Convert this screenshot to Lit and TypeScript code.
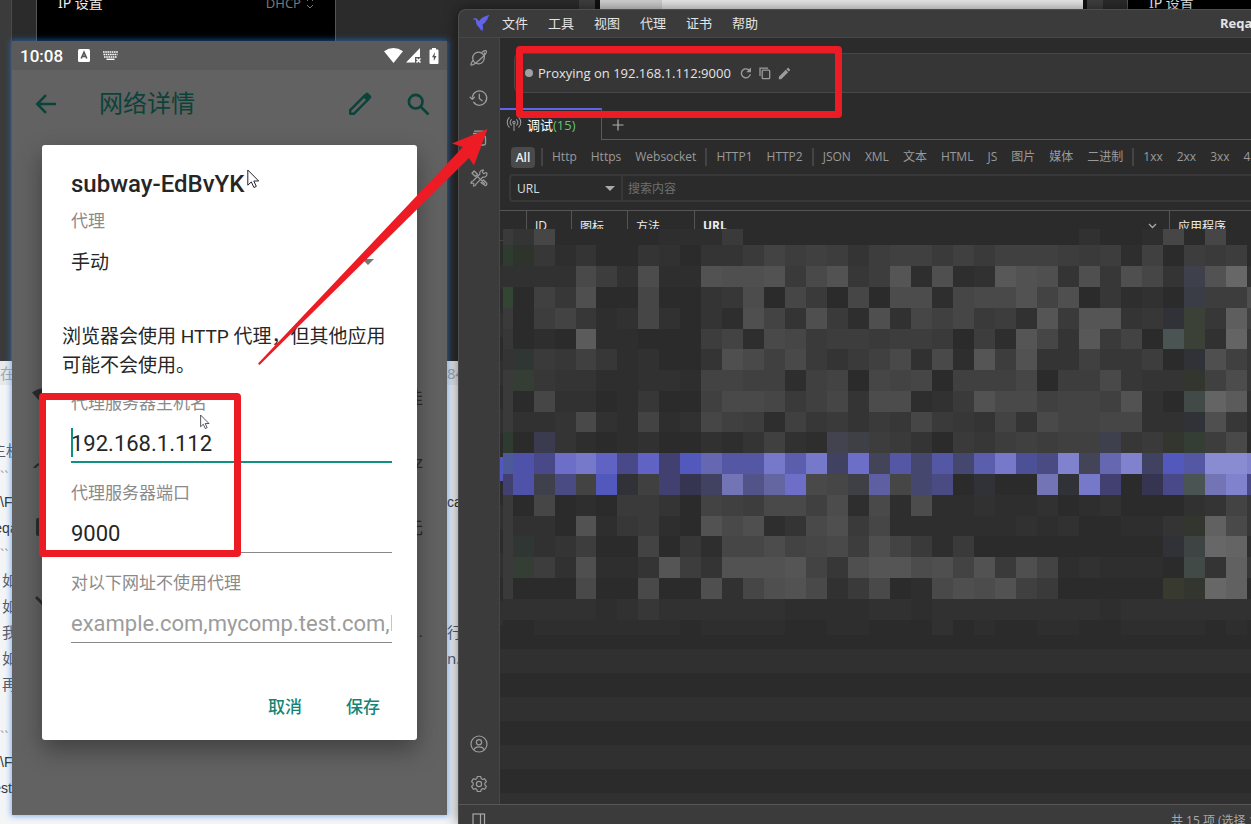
import { LitElement, html, svg, css, nothing } from "lit";
import { customElement } from "lit/decorators.js";

const CJK = css`"Noto Sans CJK SC"`;

/* ---------- mosaic data ---------- */

const GREYS = "abcdefghijklmnopqrstu";
const TINTS: Record<string, string> = {
  "1": "#2e3b31", "2": "#2e332b", "3": "#3e404c", "4": "#334633", "5": "#3a3c46", "6": "#313238",
  "7": "#3c4138", "8": "#4a5452", "9": "#303633", A: "#343e34", B: "#33362f", C: "#424a48",
  D: "#3b3b50", E: "#434350", F: "#3f3f46", G: "#3e404d", H: "#4c5a99", I: "#4e52a8",
  J: "#494989", K: "#6c6ec8", L: "#7678ca", M: "#6063c3", N: "#414070", O: "#5358bd",
  P: "#6567b0", Q: "#5457a3", R: "#5a5ead", S: "#414162", T: "#444458", U: "#45476e",
  V: "#4c5096", W: "#494b82", X: "#8082ce", Y: "#8a8cd1", Z: "#353551", "0": "#7374b5",
  "+": "#525388", "-": "#6466a2", "=": "#5e5fa2", "%": "#3e4344", "*": "#383a30",
};
const MOSAIC = [
  "fdjaaaaabbbfaaaaaaaaaaaaaaaacaabjajaa",
  "12ebdaadcaddfighgdghhfhfhhhgfgbhagfga",
  "cccckgclbbnmmnfknegobmbcpnmdmemjd3nuc",
  "4ahemaajaadelajfajallbjkknimaebca5ggm",
  "fagiebcjcadbmidmfbmcjhjfgcofoode67erh",
  "eabaqbbaaagibkjfggfggfagbojdpfia87cte",
  "d9fehebcaadmkhkfdfhkckbognddheega6mhe",
  "fAeddbbccbiihhbhiajijahhhjaggkeddBhle",
  "fajccabeaahkkjfhjdllbcfnkkhiihncaCtqc",
  "fccdkcbibcjhgbhefdfejfedidkiijjcc6meb",
  "1aDdbabcaacbdhcbEFgfdafeghghhGefBAgka",
  "HIJKLMJMNOPQQLRLSKTQUQURLVWXTPXSOQYYX",
  "NI3WiO6hNZS0+-KkjF=jUWa6aa06LNaZJ80XJ",
  "fajabaffdaihgkkhlbkblbbcbbcabcaaacdie",
  "fccanbefbankmbdkmfjbbbbbbcbcaabbdBske",
  "f9cdgaaiaebjjlijkgmifbfaaaaaaaaa6%utb",
  "fAgcmbbdogdnnnoiemoolminfmibcbbbaCdse",
  "faaakaakaamcjmnkcfkabkmlnhfaaaaa*Busa",
  "cccccbceccccccbbbbccbccccccccbccccccc",
  "aabbbbbbbabbbbaabbaaacabaabbaabbbbaba",
];
const COLS = [10, 21, 21, 21, 20, ...Array(31).fill(21), 4];
const ROWS = [16, 21, 21, 21, 21, 20, 21, 21, 21, 20, 21, 21, 21, 21, 20, 21, 21, 21, 21, 15];

const shade = (c: string) => {
  const g = GREYS.indexOf(c);
  if (g < 0) return TINTS[c] ?? "#2b2b2b";
  const v = 43 + g * 3;
  return `rgb(${v},${v},${v})`;
};

@customElement("pixel-mosaic")
class PixelMosaic extends LitElement {
  static styles = css`
    :host { display: block; }
    .m { display: block; }
  `;
  render() {
    const cells: unknown[] = [];
    let y = 0;
    ROWS.forEach((h, r) => {
      let x = 0;
      COLS.forEach((w, c) => {
        cells.push(svg`<rect x=${x} y=${y} width=${w} height=${h} fill=${shade(MOSAIC[r][c] ?? "a")}></rect>`);
        x += w;
      });
      y += h;
    });
    return html`<svg class="m" width="748" height="406" viewBox="0 0 748 406" shape-rendering="crispEdges" aria-hidden="true">${cells}</svg>`;
  }
}

/* ---------- icons ---------- */

const line = (size: number, body: unknown, w = 1.3) => html`<svg width=${size} height=${size} viewBox="0 0 20 20" fill="none"
  stroke="currentColor" stroke-width=${w} stroke-linecap="round" stroke-linejoin="round" aria-hidden="true">${body}</svg>`;
const solid = (size: number, body: unknown) => html`<svg width=${size} height=${size} viewBox="0 0 24 24" fill="currentColor" aria-hidden="true">${body}</svg>`;

const icons = {
  bird: html`<svg width="18" height="18" viewBox="0 0 18 18" aria-hidden="true"><path fill="#6163e8" d="M0.5 5.6 C1.6 4.2 3.4 3.9 4.9 4.7 L7 7.2 C9 4 12.5 2.2 17.5 .8 C16.5 3 15.8 3.6 15.2 4.2 L16 4.5 C15.2 6 14.3 6.6 13.5 7 L14 7.6 C13 9 11.8 9.8 10.6 10.2 C11 12.8 11.4 15 10.3 17.6 L9.2 15.2 L8.7 16.2 C7.8 14 7 13.2 5.6 12 C4 10.4 4.2 8.2 3.8 6.6 C3.2 5.6 2 5.4 .5 5.6Z"></path></svg>`,
  planet: line(20, svg`<circle cx="9.500" cy="10" r="5.800"></circle><path d="M13 4.200C15.400 2.600 16.900 2.200 17.300 2.800c.8 1-2 4.800-5.800 8.300S3.200 17.700 2.200 17.100c-.7-.5 0-2.300 1.900-4.700M15.300 5v3.500"></path>`),
  history: line(20, svg`<path d="M3.400 9A7.200 7.200 0 1 1 4.600 14.200"></path><path d="M1.200 9.200l2.100 2 2.100-2"></path><path d="M10.300 6.200v4.300l2.800 2.300"></path>`),
  stack: line(20, svg`<path d="M5.500 3.200h9M4.500 5.500h11"></path><rect x="3.500" y="8" width="13" height="9" rx="1.500"></rect>`),
  tools: line(20, svg`<path d="M3 5.200L5.200 3l3.200 3.200-2.200 2.200zM7.600 7.600l7.800 7.800M12 14.500l2.500-2.500 3 3c.6.700.5 1.400-.1 2s-1.300.700-2 .1z"></path><path d="M17 4.500l-2.200 1.200-1.500-1.500L14.500 2c-2.600-.3-4.300 1.700-3.600 4L4 13c-1.600.2-2.200 1.200-1.900 2.600l1.700-.6 1.200 1.200-.6 1.700c1.400.3 2.500-.4 2.700-2L14 9c2.300.700 4.200-1.300 4-3.500z" stroke-width="1.100"></path>`),
  user: line(20, svg`<circle cx="10" cy="10" r="8"></circle><circle cx="10" cy="8.200" r="2.600"></circle><path d="M4.800 15.800c.7-2 2.700-3 5.200-3s4.500 1 5.200 3"></path>`, 1.2),
  gear: line(20, svg`<circle cx="10" cy="10" r="2.600"></circle><path d="M8.300 2.500h3.400l.5 2.100 1.400.8 2.100-.7 1.700 2.900-1.600 1.500v1.800l1.600 1.500-1.700 2.900-2.100-.7-1.400.8-.5 2.100H8.300l-.5-2.100-1.400-.8-2.100.7-1.700-2.900 1.600-1.500V9.100L2.600 7.600l1.700-2.900 2.100.7 1.400-.8z"></path>`, 1.2),
  panel: html`<svg width="14" height="16" viewBox="0 0 14 16" fill="none" stroke="currentColor" stroke-width="1.200" aria-hidden="true"><rect x="1" y="1" width="11.500" height="15"></rect><path d="M8.500 1v15"></path></svg>`,
  antenna: line(16, svg`<circle cx="10" cy="8" r="1.500"></circle><path d="M10 9.500V18M6.800 11.500a4.500 4.500 0 0 1 0-7M13.200 11.500a4.500 4.500 0 0 0 0-7M4 14a8.500 8.500 0 0 1 0-12M16 14a8.500 8.500 0 0 0 0-12"></path>`),
  plus: html`<svg width="12" height="12" viewBox="0 0 12 12" stroke="currentColor" stroke-width="1.200" aria-hidden="true"><path d="M6 .5v11M.5 6h11"></path></svg>`,
  refresh: solid(14, svg`<path d="M20.500 2.500v8h-8l3.200-3.200A6.500 6.500 0 1 0 18.200 14h2.300A8.800 8.800 0 1 1 17.300 5.700z"></path>`),
  copy: html`<svg width="14" height="14" viewBox="0 0 14 14" fill="none" stroke="currentColor" stroke-width="1.300" aria-hidden="true"><path d="M2 10V2.200h8"></path><rect x="4.200" y="4.200" width="7.500" height="8.500" rx="1"></rect></svg>`,
  pen: solid(15, svg`<path d="M3 17.250V21h3.750L17.810 9.940l-3.750-3.750zM20.710 7.040a1 1 0 0 0 0-1.410l-2.340-2.340a1 1 0 0 0-1.410 0l-1.830 1.830 3.750 3.750z"></path>`),
  back: html`<svg width="22" height="20" viewBox="0 0 22 20" fill="none" stroke="currentColor" stroke-width="2.500" aria-hidden="true"><path d="M21 10H2.500M11 1.200L2.200 10l8.800 8.800"></path></svg>`,
  edit: html`<svg width="24" height="24" viewBox="0 0 24 24" aria-hidden="true"><path fill="none" stroke="currentColor" stroke-width="2.400" stroke-linejoin="round" d="M2.200 18.200L17 3.400l3.600 3.600L5.800 21.800H2.200z"></path><path fill="currentColor" d="M14.500 4.500L18 1q1-.8 2 0l3 3q.8 1 0 2l-3.500 3.500z"></path></svg>`,
  search: html`<svg width="23" height="23" viewBox="0 0 23 23" fill="none" stroke="currentColor" stroke-width="2.600" aria-hidden="true"><circle cx="8.700" cy="8.700" r="6.800"></circle><path d="M13.500 13.500l8 8"></path></svg>`,
  wifi: html`<svg width="19" height="15" viewBox="0 0 19 15" fill="currentColor" aria-hidden="true"><path d="M9.500 15L0 3.300Q9.500-3.300 19 3.300z"></path></svg>`,
  cell: html`<svg width="15" height="15" viewBox="0 0 15 15" aria-hidden="true"><path fill="currentColor" d="M14 0v9H9v5.500H0z"></path><path d="M10.500 10.500l4 4m0-4l-4 4" stroke="currentColor" stroke-width="1.500"></path></svg>`,
  battery: html`<svg width="10" height="16" viewBox="0 0 10 16" aria-hidden="true"><path fill="currentColor" d="M3 0h4v1.500h1.500q1 0 1 1v12.500q0 1-1 1H1.500q-1 0-1-1V2.500q0-1 1-1H3z"></path><path d="M6 4L3 9.200h1.800V13L7.500 8H5.500z" fill="#555"></path></svg>`,
  letter: html`<svg width="12" height="13" viewBox="0 0 12 13" aria-hidden="true"><rect width="12" height="13" rx="1.500" fill="currentColor"></rect><path d="M3.200 9.500L6 3.200l2.800 6.300M4.300 7.400h3.400" fill="none" stroke="#555" stroke-width="1.600"></path></svg>`,
  keyboard: html`<svg width="15" height="9" viewBox="0 0 15 9" aria-hidden="true" stroke="currentColor" fill="none"><path d="M0 1h15M0.500 3.500h14M1 6h13" stroke-width="1.700" stroke-dasharray="1.600 .6"></path><path d="M3.500 8.300h8" stroke-width="1.400"></path></svg>`,
  updown: html`<svg width="8" height="12" viewBox="0 0 8 12" fill="none" stroke="currentColor" aria-hidden="true"><path d="M1 4l3-3 3 3M1 8l3 3 3-3"></path></svg>`,
  cursor: html`<svg width="13" height="20" viewBox="0 0 13 20" aria-hidden="true"><path d="M.8 1v15.200l3.500-3.300 2.600 5.600 2.400-1.100-2.500-5.400h4.900z" fill="#fff" stroke="#222230" stroke-width="1"></path></svg>`,
};

/* ---------- document behind the windows ---------- */

type DocLine = { l?: string; r?: string; kind?: string };
const DOC: DocLine[] = [
  { l: "在", r: "84", kind: "faint" }, {}, {}, { l: "主机", kind: "mid" }, { l: "``", kind: "faint" },
  { l: "\\F", r: "ca", kind: "code" }, { l: "eqa", kind: "code mid" }, { l: "``", kind: "faint" },
  { l: "如", kind: "indent" }, { l: "如", kind: "indent" }, { l: "我", r: "行", kind: "indent" },
  { l: "如", r: "n.v", kind: "indent" }, { l: "再", kind: "indent" }, {}, { l: "``", kind: "faint" },
  { l: "\\F", kind: "code" }, { l: "est", kind: "code end" },
];

@customElement("desk-backdrop")
class DeskBackdrop extends LitElement {
  static styles = css`
    :host { display: flex; flex-direction: column; height: 100%; font-family: "Noto Sans", ${CJK}, sans-serif; overflow: hidden; }
    .dark { display: flex; height: 361px; flex: none; background: #2b2b2b; }
    .dark > * { flex: none; box-sizing: border-box; }
    .rail { width: 12px; background: #3b3b3b; border-right: 1px solid #4a4a4a; }
    .screen { display: flex; justify-content: space-between; width: 300px; margin-left: 24px; padding: 0 21px;
      border: 0 solid #555; border-width: 0 1px; background: #000; color: #eee; font-size: 14px; line-height: 6px; white-space: nowrap; }
    .dim { display: flex; gap: 5px; color: #777; font-size: 13px; }
    .dim svg { margin-top: -3px; }
    .strip { display: flex; margin-left: 243px; }
    .s1 { width: 16px; background: #3f3f3f; }
    .s2 { width: 5px; background: #111; }
    .s3 { width: 62px; background: #d2d2d2; }
    .s4 { width: 421px; background: #eaeaea; }
    .s5 { width: 4px; background: #111; }
    .doc { flex: 1; background: #f4f5f6; font-size: 15px; color: #555a66; width: 459px; }
    .ln { display: flex; gap: 435px; height: 26px; line-height: 26px; }
    .bit { width: 12px; display: flex; overflow: hidden; white-space: nowrap; flex: none; }
    .mid .bit { justify-content: center; }
    .end .bit { justify-content: flex-end; }
    .indent .bit:first-child { padding-left: 2px; width: 10px; }
    .code { color: #333; font-family: "Liberation Sans", sans-serif; font-size: 14px; }
    .faint { color: #a5a8ad; }
    .ln:first-child { background: #e8e9ea; height: 24px; line-height: 24px; }
  `;
  render() {
    return html`
      <div class="dark">
        <div class="rail"></div>
        <div class="screen"><span>IP 设置</span><span class="dim">DHCP ${icons.updown}</span></div>
        <div class="strip"><i class="s1"></i><i class="s2"></i><i class="s3"></i><i class="s4"></i><i class="s5"></i><i class="s1"></i></div>
        <div class="screen"><span>IP 设置</span></div>
      </div>
      <div class="doc">
        ${DOC.map((d) => html`<div class="ln ${d.kind ?? ""}"><span class="bit">${d.l ?? ""}</span><span class="bit">${d.r ?? ""}</span></div>`)}
      </div>`;
  }
}

/* ---------- phone ---------- */

@customElement("phone-window")
class PhoneWindow extends LitElement {
  static styles = css`
    :host { display: flex; flex-direction: column; position: relative; background: #626262; font-family: Roboto, ${CJK}, sans-serif;
      box-shadow: 0 0 6px 1px rgba(40, 130, 240, 0.6); }
    button { font: inherit; border: 0; background: none; padding: 0; color: inherit; display: flex; }
    .status { display: flex; align-items: center; height: 29px; padding: 0 8px; background: #5a5a5a; color: #fff; }
    .time { font-size: 17px; font-weight: 500; margin-right: 15px; }
    .status svg { margin-right: 13px; }
    .status .net svg { margin: 0 0 0 3px; }
    .status .net svg:last-child { margin-left: 8px; }
    .net { margin-left: auto; display: flex; align-items: center; }
    .bar { display: flex; align-items: center; height: 68px; padding: 0 17px 0 23px; color: #0b4239; gap: 35px; }
    .bar h1 { font-size: 24px; line-height: 30px; font-weight: 400; margin: 0 auto 0 7px; }
    .rows { display: flex; flex-direction: column; margin-top: 226px; padding: 0 24px 0 20px; color: #2c2c2c; font-size: 17px; }
    .row { display: flex; justify-content: space-between; align-items: center; height: 65px; }
    .row.tall { height: 82px; }
    .tall span { align-self: flex-end; }
    .dialog { position: absolute; left: 30px; right: 30px; top: 104px; height: 595px; box-sizing: border-box; padding: 24px 25px 0 29px; background: #fff;
      border-radius: 3px; box-shadow: 0 10px 24px rgba(0, 0, 0, 0.35); color: #262626; display: flex; flex-direction: column; }
    h2 { margin: 0; font-size: 24px; line-height: 30px; font-weight: 500; }
    label { font-size: 17px; line-height: 24px; color: #8a8a8a; }
    .l1 { margin-top: 10px; }
    .pick { display: flex; align-items: center; margin-top: 14px; height: 30px; padding-right: 18px; }
    select { appearance: none; flex: 1; border: 0; background: none; padding: 0; font: inherit; font-size: 19px; color: inherit; height: 30px; }
    .tri { border: 6px solid transparent; border-top-color: #777; border-bottom: 0; }
    p { margin: 45px -9px 0; font-size: 19px; line-height: 29px; width: 336px; }
    .l2 { margin-top: 11px; }
    input { font: inherit; font-size: 22px; height: 41px; padding: 3px 0 0; box-sizing: border-box; border: 0; border-bottom: 1px solid #888; outline: 0; background: none; color: #262626; width: 321px; border-radius: 0; margin-top: 7px; }
    input::placeholder { color: #9c9c9c; opacity: 1; }
    .field { position: relative; display: flex; flex-direction: column; }
    .on input { border-bottom: 2px solid #0f9182; }
    .caret { position: absolute; left: 0; bottom: 6px; width: 2px; height: 29px; background: #0f9182; }
    .l3 { margin-top: 18px; }
    .acts { display: flex; justify-content: flex-end; gap: 44px; margin-top: 51px; padding-right: 12px; font-size: 17px; line-height: 26px; font-weight: 500; color: #128577; }
  `;
  render() {
    return html`
      <div class="status"><span class="time">10:08</span>${icons.letter}${icons.keyboard}<span class="net">${icons.wifi}${icons.cell}${icons.battery}</span></div>
      <div class="bar"><button aria-label="返回">${icons.back}</button><h1>网络详情</h1><button aria-label="修改">${icons.edit}</button><button aria-label="搜索">${icons.search}</button></div>
      <div class="rows">
        <div class="row">${solid(24, svg`<path d="M12 21L0 7.500Q12-1 24 7.500z"></path>`)}<span>极佳</span></div>
        <div class="row">${solid(24, svg`<path d="M1 18A13 13 0 0 1 23 18H20A10 10 0 0 0 4 18z"></path>`)}<span>2.4 GHz</span></div>
        <div class="row">${solid(24, svg`<path d="M6 3h14q2 0 2 2v14q0 2-2 2H6q-2 0-2-2V5q0-2 2-2"></path>`)}<span>无</span></div>
        <div class="row tall">${solid(24, svg`<path d="M5 8l7 7 7-7 2 2-9 9-9-9z"></path>`)}<span>...</span></div>
      </div>
      <div class="dialog" role="dialog" aria-labelledby="t">
        <h2 id="t">subway-EdBvYK</h2>
        <label class="l1" for="mode">代理</label>
        <div class="pick"><select id="mode"><option>手动</option></select><i class="tri"></i></div>
        <p>浏览器会使用 HTTP 代理，但其他应用可能不会使用。</p>
        <label class="l2" for="host">代理服务器主机名</label>
        <div class="field on"><input id="host" value="192.168.1.112"><i class="caret"></i></div>
        <label class="l3" for="port">代理服务器端口</label>
        <div class="field"><input id="port" value="9000"></div>
        <label class="l3" for="skip">对以下网址不使用代理</label>
        <div class="field"><input id="skip" placeholder="example.com,mycomp.test.com,localhost"></div>
        <div class="acts"><button>取消</button><button>保存</button></div>
      </div>`;
  }
}

/* ---------- proxy tool window ---------- */

const FILTERS = [
  ["All"], ["Http", "Https", "Websocket"], ["HTTP1", "HTTP2"],
  ["JSON", "XML", "文本", "HTML", "JS", "图片", "媒体", "二进制"], ["1xx", "2xx", "3xx", "4xx"],
];

@customElement("proxy-window")
class ProxyWindow extends LitElement {
  static styles = css`
    :host { display: flex; flex-direction: column; background: #3b3b3b; border-radius: 8px 0 0 0; border: 1px solid #4e4e4e; border-width: 1px 0 0 1px; box-sizing: border-box;
      overflow: hidden; color: #e4e4e4; font-family: "Open Sans", ${CJK}, sans-serif; font-size: 13px; box-shadow: 0 0 14px rgba(0, 0, 0, 0.5); }
    button { font: inherit; border: 0; background: none; padding: 0; color: inherit; }
    .top { display: flex; align-items: center; height: 25px; flex: none; padding: 0 0 2px 13px; border-bottom: 1px solid #474747; }
    .menu { display: flex; gap: 20px; margin-left: 12px; }
    .menu button { line-height: 20px; }
    .title { margin-left: auto; width: 31px; white-space: nowrap; font-weight: 700; }
    .mid { display: flex; flex: 1; min-height: 0; }
    .side { display: flex; flex-direction: column; width: 41px; box-sizing: border-box; border-right: 1px solid #474747; color: #9c9c9c; flex: none; }
    .side button { height: 40px; display: flex; align-items: center; justify-content: center; }
    .side .last { margin-top: auto; }
    .main { flex: 1; min-width: 0; background: #2b2b2b; display: flex; flex-direction: column; overflow: hidden; }
    .proxy { display: flex; align-items: center; height: 38px; flex: none; margin: 15px 0 0 14px; padding-left: 10px; border: 1px solid #474747; border-right: 0; border-radius: 6px 0 0 6px;
      background: #363636; color: #9c9c9c; gap: 5px; }
    .proxy b { font-weight: 400; color: #e4e4e4; white-space: nowrap; margin-right: 3px; }
    .proxy button { display: flex; }
    .dot { width: 8px; height: 8px; border-radius: 50%; background: #a0a0a0; }
    .tabs { display: flex; height: 32px; margin-top: 15px; flex: none; }
    .tab { display: flex; align-items: center; width: 102px; box-sizing: border-box; padding: 0 0 2px 6px; gap: 5px; border-top: 2px solid #6163e8; border-right: 1px solid #5a5a5a; color: #fff; }
    .tab svg { color: #9c9c9c; }
    .cnt { color: #5fc472; }
    .fill { flex: 1; border-bottom: 1px solid #5a5a5a; display: flex; align-items: center; padding: 2px 0 0 10px; color: #b0b0b0; }
    .fill button { display: flex; }
    .filters { display: flex; align-items: center; height: 34px; flex: none; padding-left: 11px; font-size: 12px; color: #9a9a9a; overflow: hidden; }
    .grp { display: flex; gap: 14px; flex: none; }
    .grp + .grp { border-left: 2px solid #444; line-height: 18px; padding: 0 9px; }
    .grp:first-child { padding-right: 6px; }
    .grp:first-child button { background: #4a4a4a; color: #f0f0f0; border-radius: 4px; width: 24px; height: 21px; font-weight: 600; }
    .filters button { white-space: nowrap; }
    .find { display: flex; height: 28px; flex: none; margin-left: 9px; border: 2px solid #383838; border-right: 0; border-radius: 4px 0 0 4px; box-sizing: border-box; font-size: 12px; }
    .scope { display: flex; align-items: center; width: 112px; border-right: 2px solid #383838; box-sizing: border-box; padding: 0 6px; }
    .find select { appearance: none; flex: 1; background: none; border: 0; color: #ddd; font: inherit; padding: 0; }
    .find input { flex: 1; background: none; border: 0; font: inherit; color: #ddd; padding: 0 5px; outline: 0; }
    .find input::placeholder { color: #6f6f6f; opacity: 1; }
    .tri { border: 5px solid transparent; border-top-color: #aaa; border-bottom: 0; }
    .grid { margin-top: 8px; flex: 1; min-height: 0; overflow: hidden; position: relative; }
    table { width: 100%; border-collapse: separate; border-spacing: 0; table-layout: fixed; border-top: 1px solid #555; }
    th { height: 30px; padding: 0 8px; box-sizing: border-box; border-right: 1px solid #555; text-align: left; font-size: 12px; font-weight: 400; white-space: nowrap; border-bottom: 1px solid #444; color: #eee; }
    th:last-child { border-right: 0; }
    .url { font-weight: 700; }
    .url svg { float: right; margin: 6px 4px 0 0; color: #aaa; }
    .c0 { width: 27px; } .c1 { width: 45px; } .c2 { width: 56px; } .c3 { width: 67px; } .c4 { width: 475px; }
    td { height: 24px; padding: 0; }
    tr:nth-child(even) td { background: #303030; }
    tr.sel td { background: #5358c0; }
    pixel-mosaic { position: absolute; left: 3px; top: 19px; }
    .foot { display: flex; height: 19px; flex: none; border-top: 1px solid #585858; padding-left: 13px; color: #a8a8a8; overflow: hidden; font-size: 12px; }
    .foot svg { margin-top: 8px; }
    .foot span { margin-left: auto; width: 80px; white-space: nowrap; line-height: 32px; height: 19px; }
  `;
  render() {
    const rows = Array.from({ length: 24 }, (_, i) => i);
    return html`
      <div class="top">${icons.bird}<nav class="menu">${["文件", "工具", "视图", "代理", "证书", "帮助"].map((m) => html`<button>${m}</button>`)}</nav><span class="title">Reqable</span></div>
      <div class="mid">
        <nav class="side">
          <button aria-label="调试">${icons.planet}</button><button aria-label="历史">${icons.history}</button>
          <button aria-label="集合">${icons.stack}</button><button aria-label="工具箱">${icons.tools}</button>
          <button class="last" aria-label="账户">${icons.user}</button><button aria-label="设置">${icons.gear}</button>
        </nav>
        <div class="main">
          <div class="proxy"><i class="dot"></i><b>Proxying on 192.168.1.112:9000</b><button aria-label="刷新">${icons.refresh}</button><button aria-label="复制">${icons.copy}</button><button aria-label="编辑">${icons.pen}</button></div>
          <div class="tabs"><div class="tab">${icons.antenna}<span>调试<span class="cnt">(15)</span></span></div><div class="fill"><button aria-label="新建">${icons.plus}</button></div></div>
          <div class="filters">${FILTERS.map((g) => html`<div class="grp">${g.map((f) => html`<button>${f}</button>`)}</div>`)}</div>
          <div class="find"><div class="scope"><select aria-label="范围"><option>URL</option></select><i class="tri"></i></div><input aria-label="搜索" placeholder="搜索内容"></div>
          <div class="grid">
            <table>
              <thead><tr><th class="c0"></th><th class="c1">ID</th><th class="c2">图标</th><th class="c3">方法</th>
                <th class="c4 url">URL<svg width="9" height="6" viewBox="0 0 9 6" fill="none" stroke="currentColor" stroke-width="1.300"><path d="M1 1l3.500 3.500L8 1"></path></svg></th><th>应用程序</th></tr></thead>
              <tbody>${rows.map((i) => html`<tr class=${i === 9 ? "sel" : nothing}><td colspan="6"></td></tr>`)}</tbody>
            </table>
            <pixel-mosaic></pixel-mosaic>
          </div>
        </div>
      </div>
      <div class="foot">${icons.panel}<span>共 15 项 (选择 1 项)</span></div>`;
  }
}

/* ---------- desktop ---------- */

@customElement("app-root")
class AppRoot extends LitElement {
  static styles = css`
    :host { display: block; position: relative; height: 100vh; overflow: hidden; background: #2b2b2b; }
    phone-window { position: absolute; left: 12px; top: 41px; width: 435px; height: 774px; }
    proxy-window { position: absolute; left: 458px; top: 9px; right: 0; bottom: 0; }
    .box { position: absolute; border: 7px solid #ed1c24; border-radius: 4px; box-sizing: border-box; }
    .b1 { left: 516px; top: 46px; width: 326px; height: 72px; }
    .b2 { left: 39px; top: 393px; width: 202px; height: 164px; }
    .arrow { position: absolute; left: 255px; top: 125px; }
    .cur { position: absolute; left: 247px; top: 169px; }
    .cur.small { left: 200px; top: 414px; }
    .cur.small svg { width: 10px; height: 16px; }
  `;
  render() {
    return html`
      <desk-backdrop></desk-backdrop>
      <phone-window></phone-window>
      <proxy-window></proxy-window>
      <div class="cur">${icons.cursor}</div>
      <div class="cur small">${icons.cursor}</div>
      <div class="box b1"></div>
      <div class="box b2"></div>
      <svg class="arrow" width="235" height="243" viewBox="255 125 235 243" aria-hidden="true"><path fill="#ed1c24" d="M487.500 129L452 143.500l11 3.500L258 363.500l1.500 1.500L469 158l5 7.500z"></path></svg>`;
  }
}
